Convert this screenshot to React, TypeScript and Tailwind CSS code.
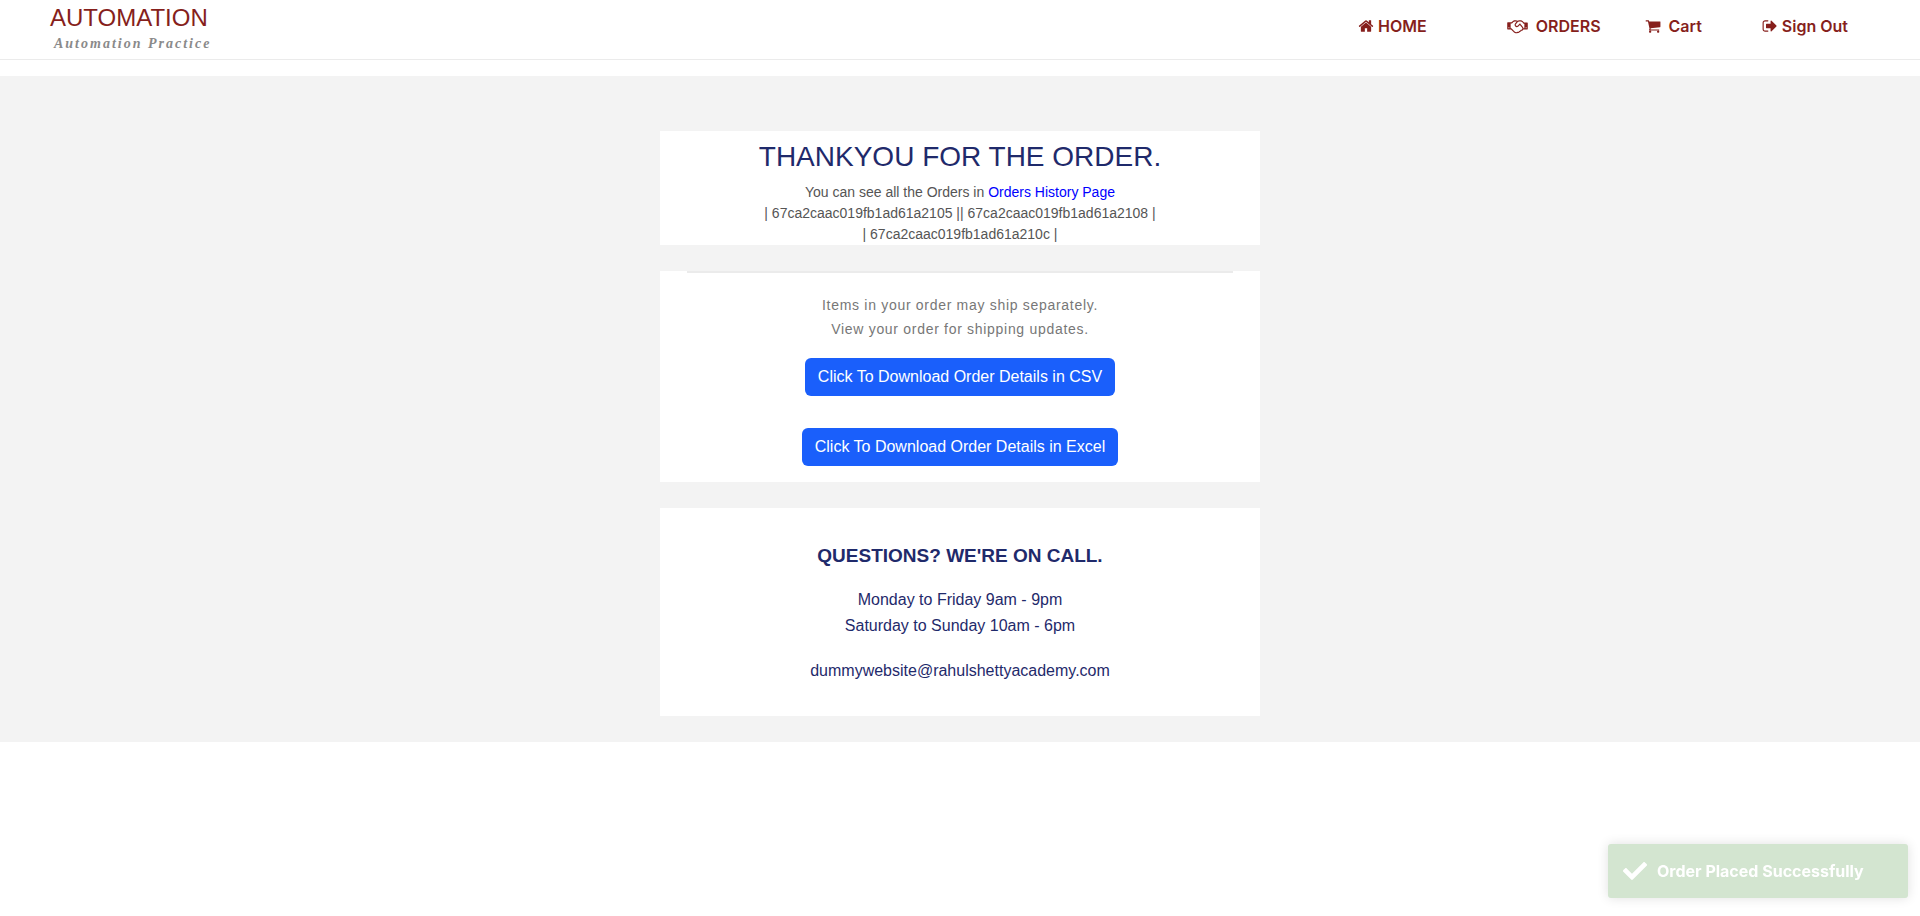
import React from "react";
import { FaCheck } from "react-icons/fa";

const HOME =
  "M1472 992v480q0 26-19 45t-45 19h-384v-384h-256v384h-384q-26 0-45-19t-19-45v-480q0-1 .5-3t.5-3l575-474 575 474q1 2 1 6zm223-69l-62 74q-8 9-21 11h-3q-13 0-21-7l-692-577-692 577q-12 8-24 7-13-2-21-11l-62-74q-8-10-7-23.5t11-21.5l719-599q32-26 76-26t76 26l244 204v-195q0-14 9-23t23-9h192q14 0 23 9t9 23v408l219 182q10 8 11 21.5t-7 23.5z";
const HANDSHAKE =
  "M192 1152q40 0 56-32t0-64-56-32-56 32 0 64 56 32zm1473-58q-10-13-38.5-50t-41.5-54-38-49-42.5-53-40.5-47-45-49l-125 140q-83 94-208.5 92t-205.5-98q-57-69-56.5-158t58.5-157l177-206q-22-11-51-16.5t-47.5-6-56.5.5-49 1q-92 0-158 66l-158 158h-155v544q5 0 21-.5t22 0 19.5 2 20.5 4.5 17.5 8.5 18.5 13.5l297 292q115 111 227 111 78 0 125-47 57 20 112.5-8t72.5-85q74 6 127-44 20-18 36-45.5t14-50.5q10 10 43 10 43 0 77-21t49.5-53 12-71.5-30.5-73.5zm159 58h96v-512h-93l-157-180q-66-76-169-76h-167q-89 0-146 67l-209 243q-28 33-28 75t27 75q43 51 110 52t111-49l193-218q25-23 53.5-21.5t47 27 8.5 56.5q16 19 56 63t60 68q29 36 82.5 105.5t64.5 84.5q52 66 60 140zm288 0q40 0 56-32t0-64-56-32-56 32 0 64 56 32zm192-576v640q0 26-19 45t-45 19h-434q-27 65-82 106.5t-125 51.5q-33 48-80.5 81.5t-102.5 45.5q-42 53-104.5 81.5t-128.5 24.5q-60 34-126 39.5t-127.5-14-117-53.5-103.5-81l-287-282h-358q-26 0-45-19t-19-45v-672q0-26 19-45t45-19h421q14-14 47-48t47.5-48 44-40 50.5-37.5 51-25.5 62-19.5 68-5.5h117q99 0 181 56 82-56 181-56h167q35 0 67 6t56.5 14.5 51.5 26.5 44.5 31 43 39.5 39 41 41 44.5 41.5 48.5h355q26 0 45 19t19 45z";
const CART =
  "M704 1536q0 52-38 90t-90 38-90-38-38-90 38-90 90-38 90 38 38 90zm896 0q0 52-38 90t-90 38-90-38-38-90 38-90 90-38 90 38 38 90zm128-1088v512q0 24-16.5 42.5t-40.5 21.5l-1044 122q13 60 13 70 0 16-24 64h920q26 0 45 19t19 45-19 45-45 19h-1024q-26 0-45-19t-19-45q0-11 8-31.5t16-36 21.5-40 15.5-29.5l-177-823h-204q-26 0-45-19t-19-45 19-45 45-19h256q16 0 28.5 6.5t19.5 15.5 13 24.5 8 26 5.5 29.5 4.5 26h1201q26 0 45 19t19 45z";
const SIGN_OUT =
  "M704 1440q0 4 1 20t.5 26.5-3 23.5-10 19.5-20.5 6.5h-320q-119 0-203.5-84.5t-84.5-203.5v-704q0-119 84.5-203.5t203.5-84.5h320q13 0 22.5 9.5t9.5 22.5q0 4 1 20t.5 26.5-3 23.5-10 19.5-20.5 6.5h-320q-66 0-113 47t-47 113v704q0 66 47 113t113 47h312l11.5 1 11.5 3 8 5.5 7 9 2 13.5zm928-544q0 26-19 45l-544 544q-19 19-45 19t-45-19-19-45v-288h-448q-26 0-45-19t-19-45v-384q0-26 19-45t45-19h448v-288q0-26 19-45t45-19 45 19l544 544q19 19 19 45z";

function Glyph({ path }: { path: string }) {
  return (
    <svg viewBox="0 0 1792 1792" className="size-4" fill="currentColor" aria-hidden="true">
      <path d={path} />
    </svg>
  );
}

function Header() {
  return (
    <header className="flex h-15 items-start justify-between border-b border-[#ebebeb] pr-18 pl-[50px]">
      <a href="#home" className="flex flex-col pt-1">
        <span className="text-2xl leading-7 text-[#861f1c]">AUTOMATION</span>
        <span className="pl-1 font-['Liberation_Serif',serif] text-sm leading-6 font-bold tracking-[2px] text-[#8a8a8a] italic">
          Automation Practice
        </span>
      </a>
      <nav
        aria-label="Main"
        className="flex items-center pt-[14px] font-['Inter',sans-serif] text-base leading-6 font-semibold text-[#861f1c]"
      >
        <button type="button" className="mr-20 flex items-center gap-1">
          <Glyph path={HOME} />
          HOME
        </button>
        <button type="button" className="mr-11 flex items-center gap-2">
          <svg viewBox="0 0 2304 1792" className="h-4 w-[21px]" fill="currentColor" aria-hidden="true">
            <path d={HANDSHAKE} />
          </svg>
          ORDERS
        </button>
        <button type="button" className="mr-15 flex items-center gap-2">
          <Glyph path={CART} />
          Cart
        </button>
        <button type="button" className="flex items-center gap-1">
          <Glyph path={SIGN_OUT} />
          Sign Out
        </button>
      </nav>
    </header>
  );
}

function DownloadButton({ children }: { children: React.ReactNode }) {
  return (
    <button
      type="button"
      className="rounded-md bg-[#1a5ffb] px-[13px] py-[7px] text-base leading-6 text-white"
    >
      {children}
    </button>
  );
}

export default function App() {
  return (
    <div className="min-h-screen bg-white font-['Liberation_Sans',Arial,sans-serif]">
      <Header />
      <main className="mt-4 flex flex-col items-center gap-[26px] bg-[#f3f3f3] pt-[55px] pb-[26px] text-center">
        <section className="w-full max-w-[600px] bg-white px-20 pt-2 text-sm leading-[21px] text-[#555555]">
          <h1 className="pb-[7px] text-[28px] leading-9 text-[#1f2a6b]">THANKYOU FOR THE ORDER.</h1>
          <p>
            You can see all the Orders in{" "}
            <a href="#orders" className="text-[#0000ff]">
              Orders History Page
            </a>
          </p>
          <p>| 67ca2caac019fb1ad61a2105 || 67ca2caac019fb1ad61a2108 |</p>
          <p>| 67ca2caac019fb1ad61a210c |</p>
        </section>

        <section className="flex w-full max-w-[600px] flex-col items-center bg-white px-[27px] pb-4">
          <hr className="w-full border-t-2 border-[#ebebeb]" />
          <p className="pt-5 pb-[17px] text-sm leading-6 tracking-wider text-[#777777]">
            Items in your order may ship separately.
            <br />
            View your order for shipping updates.
          </p>
          <div className="flex flex-col items-center gap-8">
            <DownloadButton>Click To Download Order Details in CSV</DownloadButton>
            <DownloadButton>Click To Download Order Details in Excel</DownloadButton>
          </div>
        </section>

        <section className="w-full max-w-[600px] bg-white pt-[33px] pb-8 text-base leading-[26px] text-[#1f2a6b]">
          <h2 className="pb-4 text-[19px] leading-[30px] font-bold">QUESTIONS? WE&apos;RE ON CALL.</h2>
          <p>
            Monday to Friday 9am - 9pm
            <br />
            Saturday to Sunday 10am - 6pm
          </p>
          <p className="pt-[19px]">dummywebsite@rahulshettyacademy.com</p>
        </section>
      </main>

      <div
        role="status"
        className="fixed right-3 bottom-[18px] flex w-[300px] items-center gap-[10px] rounded-[3px] bg-[#d3e5d0] p-[15px] font-['Inter',sans-serif] text-base leading-6 font-bold text-white shadow-[0_0_12px_#e0e0e0]"
      >
        <FaCheck className="size-6" aria-hidden="true" />
        Order Placed Successfully
      </div>
    </div>
  );
}
